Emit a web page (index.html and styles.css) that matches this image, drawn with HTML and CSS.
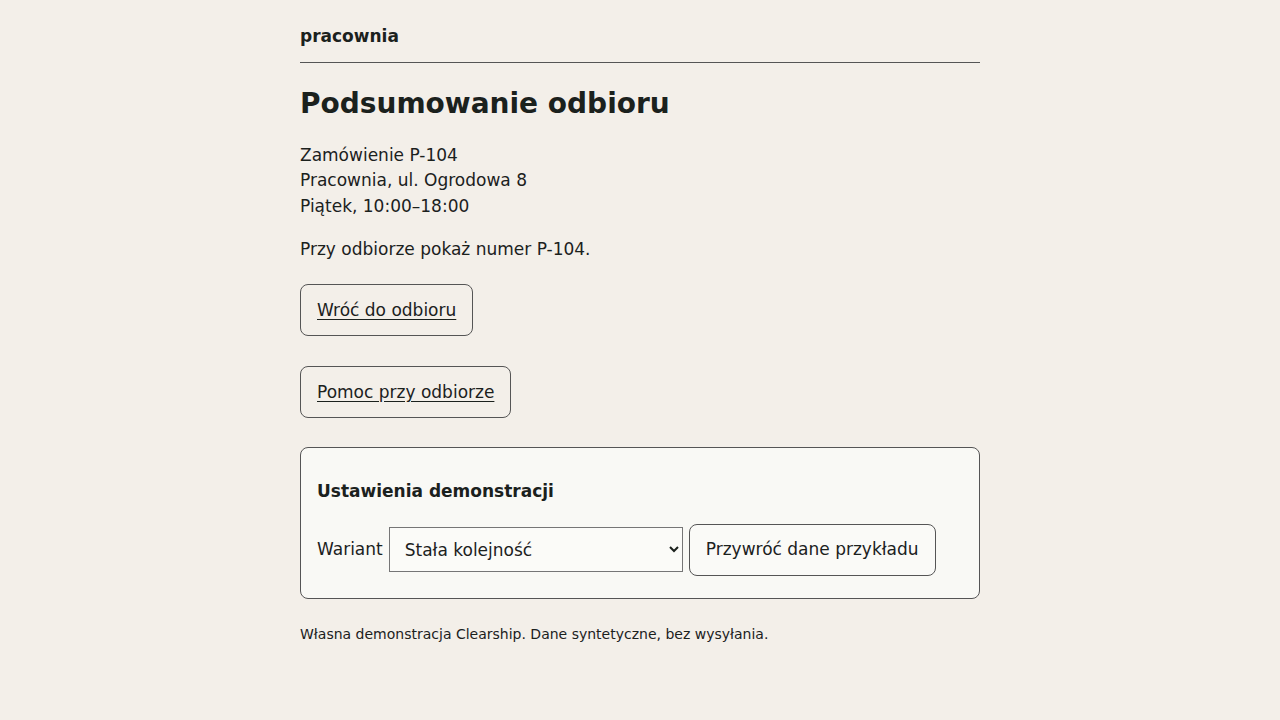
FILE: index.html
```html
<!DOCTYPE html>
<html lang="pl">
<head>
  <meta charset="UTF-8" />
  <meta name="viewport" content="width=device-width, initial-scale=1.0"/>
  <title>Podsumowanie odbioru</title>
  <link rel="stylesheet" href="styles.css">
</head>
<body>
  <div class="page">
    <header class="site">pracownia</header>

    <main>
      <h1>Podsumowanie odbioru</h1>
      <p class="summary">
        Zamówienie P-104<br>
        Pracownia, ul. Ogrodowa 8<br>
        Piątek, 10:00–18:00
      </p>
      <p>Przy odbiorze pokaż numer P-104.</p>

      <div class="links">
        <a class="btn-link" href="#">Wróć do odbioru</a>
        <a class="btn-link" href="#">Pomoc przy odbiorze</a>
      </div>

      <section class="demo">
        <h2>Ustawienia demonstracji</h2>
        <div class="demo-row">
          <label for="variant">Wariant</label>
          <select id="variant">
            <option>Stała kolejność</option>
            <option>Losowa kolejność</option>
          </select>
          <button type="button">Przywróć dane przykładu</button>
        </div>
      </section>
    </main>

    <footer class="note">Własna demonstracja Clearship. Dane syntetyczne, bez wysyłania.</footer>
  </div>
</body>
</html>
```

FILE: styles.css
```css
body {
  margin: 0;
  background-color: #f3efe9;
  color: #1b211d;
  font-family: "DejaVu Sans", Verdana, sans-serif;
  font-size: 17px;
  line-height: 1.5;
}

.page {
  width: 680px;
  margin: 0 auto;
  padding-top: 24px;
}

.site {
  font-weight: bold;
  padding-bottom: 12px;
  border-bottom: 1px solid #555;
}

h1 {
  font-size: 28px;
  line-height: 36px;
  margin: 23px 0 21px;
}

p {
  margin: 0 0 17px;
}

.summary {
  margin-bottom: 18px;
}

.links {
  display: flex;
  flex-direction: column;
  align-items: flex-start;
  gap: 30px;
  margin-top: 21px;
}

.btn-link {
  display: inline-block;
  padding: 12px 16px;
  border: 1px solid #555;
  border-radius: 8px;
  line-height: 26px;
  color: #1b211d;
  text-decoration: underline;
  text-underline-offset: 3px;
}

.demo {
  margin-top: 29px;
  padding: 16px 16px 22px;
  background-color: #f9f9f5;
  border: 1px solid #555;
  border-radius: 8px;
}

.demo h2 {
  font-size: 17px;
  line-height: 25.5px;
  margin: 15px 0 20px;
}

.demo-row {
  display: flex;
  align-items: center;
  gap: 6px;
}

select {
  width: 294px;
  height: 45px;
  padding: 0 11px;
  font-family: inherit;
  font-size: 17px;
  color: #1b211d;
  background-color: #fbfbf8;
  border: 1px solid #767676;
  border-radius: 0;
}

button {
  padding: 12px 16px;
  font-family: inherit;
  font-size: 17px;
  line-height: 25.5px;
  color: #1b211d;
  background-color: #fafaf7;
  border: 1px solid #555;
  border-radius: 8px;
}

.note {
  margin-top: 25px;
  font-size: 14px;
  line-height: 21px;
}
```
